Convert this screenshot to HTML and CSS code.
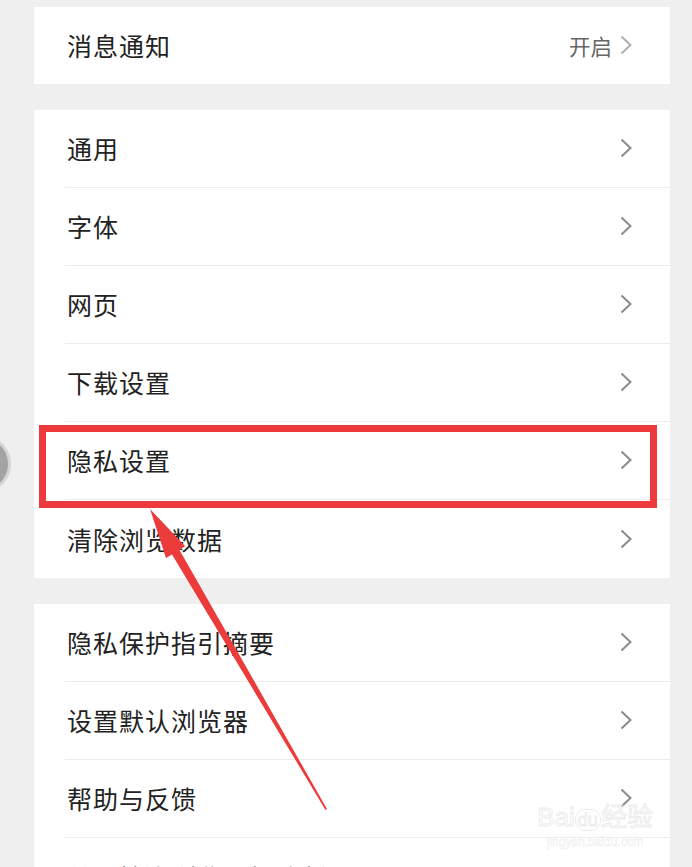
FILE: index.html
```html
<!DOCTYPE html>
<html lang="zh-CN">
<head>
<meta charset="utf-8">
<title>设置</title>
<link rel="stylesheet" href="styles.css">
</head>
<body>
<div class="page">
  <div class="edge-knob"></div>

  <section class="card card-first">
    <div class="row">
      <span class="label">消息通知</span>
      <span class="value">开启</span>
      <svg class="chev chev-light" width="12" height="20" viewBox="0 0 12 20"><polyline points="1.5,1.5 10.5,10 1.5,18.5" fill="none" stroke="#b0b0b0" stroke-width="2"/></svg>
    </div>
  </section>

  <section class="card">
    <div class="row"><span class="label">通用</span><svg class="chev" width="12" height="20" viewBox="0 0 12 20"><polyline points="1.5,1.5 10.5,10 1.5,18.5" fill="none" stroke="#8a8a8a" stroke-width="2"/></svg></div>
    <div class="row"><span class="label">字体</span><svg class="chev" width="12" height="20" viewBox="0 0 12 20"><polyline points="1.5,1.5 10.5,10 1.5,18.5" fill="none" stroke="#8a8a8a" stroke-width="2"/></svg></div>
    <div class="row"><span class="label">网页</span><svg class="chev" width="12" height="20" viewBox="0 0 12 20"><polyline points="1.5,1.5 10.5,10 1.5,18.5" fill="none" stroke="#8a8a8a" stroke-width="2"/></svg></div>
    <div class="row"><span class="label">下载设置</span><svg class="chev" width="12" height="20" viewBox="0 0 12 20"><polyline points="1.5,1.5 10.5,10 1.5,18.5" fill="none" stroke="#8a8a8a" stroke-width="2"/></svg></div>
    <div class="row"><span class="label">隐私设置</span><svg class="chev" width="12" height="20" viewBox="0 0 12 20"><polyline points="1.5,1.5 10.5,10 1.5,18.5" fill="none" stroke="#8a8a8a" stroke-width="2"/></svg></div>
    <div class="row"><span class="label">清除浏览数据</span><svg class="chev" width="12" height="20" viewBox="0 0 12 20"><polyline points="1.5,1.5 10.5,10 1.5,18.5" fill="none" stroke="#8a8a8a" stroke-width="2"/></svg></div>
  </section>

  <section class="card">
    <div class="row"><span class="label">隐私保护指引摘要</span><svg class="chev" width="12" height="20" viewBox="0 0 12 20"><polyline points="1.5,1.5 10.5,10 1.5,18.5" fill="none" stroke="#8a8a8a" stroke-width="2"/></svg></div>
    <div class="row"><span class="label">设置默认浏览器</span><svg class="chev" width="12" height="20" viewBox="0 0 12 20"><polyline points="1.5,1.5 10.5,10 1.5,18.5" fill="none" stroke="#8a8a8a" stroke-width="2"/></svg></div>
    <div class="row"><span class="label">帮助与反馈</span><svg class="chev" width="12" height="20" viewBox="0 0 12 20"><polyline points="1.5,1.5 10.5,10 1.5,18.5" fill="none" stroke="#8a8a8a" stroke-width="2"/></svg></div>
    <div class="row"><span class="label">关于搜狗浏览器极速版</span><svg class="chev" width="12" height="20" viewBox="0 0 12 20"><polyline points="1.5,1.5 10.5,10 1.5,18.5" fill="none" stroke="#8a8a8a" stroke-width="2"/></svg></div>
  </section>

  <div class="highlight"></div>

  <svg class="arrow" width="692" height="867" viewBox="0 0 692 867">
    <polygon points="150,509 185,546 179.5,550 327,809 325.5,810 172,554.5 166,558" fill="#ec3b3b"/>
  </svg>

  <div class="watermark">
    <div class="wm-main">Bai<span class="wm-du">du</span>经验</div>
    <div class="wm-sub">jingyan.baidu.com</div>
  </div>
</div>
</body>
</html>
```

FILE: styles.css
```css
html, body {
  margin: 0;
  padding: 0;
  background: #efefef;
}

.page {
  position: relative;
  width: 692px;
  height: 867px;
  overflow: hidden;
  padding-top: 7px;
  box-sizing: border-box;
  font-family: "Noto Sans CJK SC", "Noto Sans", sans-serif;
}

.card {
  background: #ffffff;
  margin: 26px 22px 0 34px;
}

.card-first {
  margin-top: 0;
}

.row {
  display: flex;
  align-items: center;
  height: 78px;
  box-sizing: border-box;
  margin-left: 31px;
  padding-left: 2px;
  padding-right: 38px;
  padding-bottom: 1px;
  border-bottom: 1px solid #ececec;
}

.card-first .row {
  height: 77px;
  border-bottom: none;
}

.card .row:last-child {
  border-bottom: none;
}

.label {
  flex: 1;
  font-size: 25px;
  color: #222222;
  letter-spacing: 1px;
}

.value {
  font-size: 21.5px;
  color: #666666;
  margin-right: 8px;
}

.chev {
  display: block;
  flex: none;
}

.highlight {
  position: absolute;
  left: 39px;
  top: 425px;
  width: 618px;
  height: 83px;
  box-sizing: border-box;
  border: 7px solid #ee3a3c;
}

.arrow {
  position: absolute;
  left: 0;
  top: 0;
}

.edge-knob {
  position: absolute;
  left: -36px;
  top: 440px;
  width: 44px;
  height: 48px;
  border-radius: 50%;
  background: #a3a3a3;
  box-shadow: 0 0 0 3px #d4d4d4;
}

.watermark {
  position: absolute;
  left: 530px;
  top: 802px;
  width: 130px;
  text-align: center;
  font-family: "Liberation Sans", sans-serif;
  color: rgba(255, 255, 255, 0.5);
  -webkit-text-stroke: 1px rgba(210, 210, 210, 0.45);
}

.wm-main {
  font-size: 26px;
  line-height: 30px;
}

.wm-du {
  font-size: 18px;
  border: 1px solid rgba(210, 210, 210, 0.45);
  border-radius: 10px;
  padding: 0 2px;
}

.wm-sub {
  font-size: 12px;
  line-height: 14px;
  -webkit-text-stroke: 0.5px rgba(210, 210, 210, 0.45);
}
```
